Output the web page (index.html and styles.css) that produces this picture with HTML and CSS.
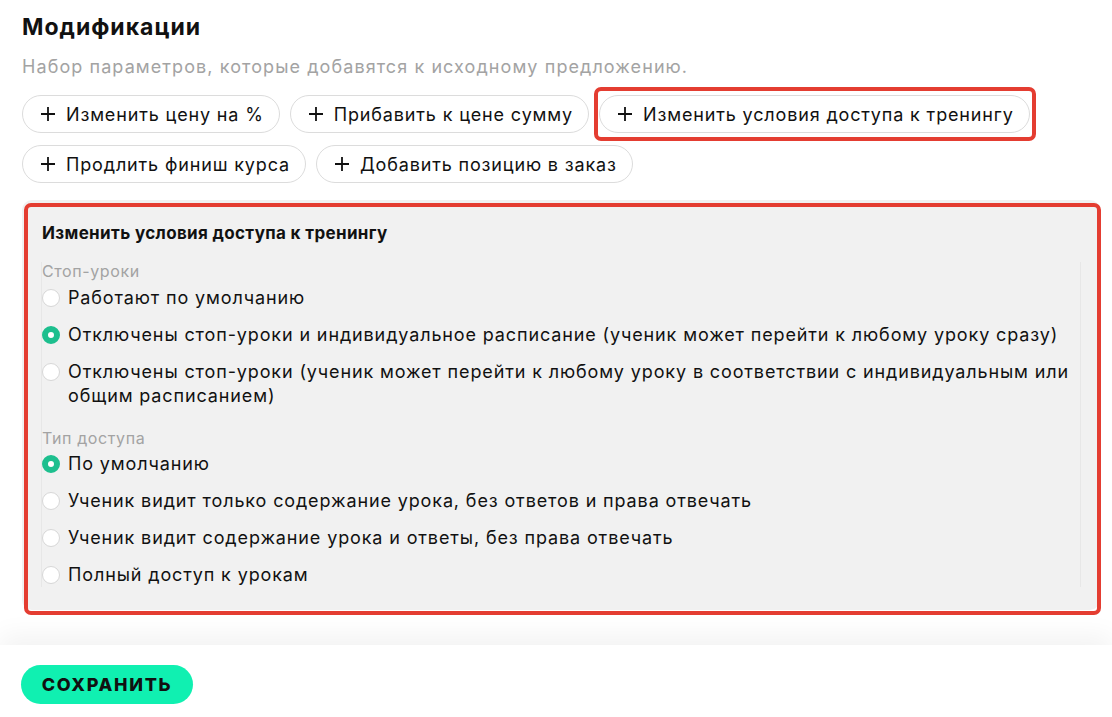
FILE: index.html
```html
<!DOCTYPE html>
<html lang="ru">

<head>
    <title>Модификации</title>
    <link rel="stylesheet" href="styles.css">
</head>

<body>
    <div class="page">
        <h2 class="section-title">Модификации</h2>
        <p class="section-hint">Набор параметров, которые добавятся к исходному предложению.</p>

        <div class="chips">
            <button class="chip">
                <svg class="plus" viewBox="0 0 14 14"><path d="M7 0v14M0 7h14" /></svg>
                Изменить цену на %
            </button>
            <button class="chip">
                <svg class="plus" viewBox="0 0 14 14"><path d="M7 0v14M0 7h14" /></svg>
                Прибавить к цене сумму
            </button>
            <button class="chip marked">
                <svg class="plus" viewBox="0 0 14 14"><path d="M7 0v14M0 7h14" /></svg>
                Изменить условия доступа к тренингу
            </button>
            <button class="chip">
                <svg class="plus" viewBox="0 0 14 14"><path d="M7 0v14M0 7h14" /></svg>
                Продлить финиш курса
            </button>
            <button class="chip">
                <svg class="plus" viewBox="0 0 14 14"><path d="M7 0v14M0 7h14" /></svg>
                Добавить позицию в заказ
            </button>
        </div>

        <div class="mod-panel marked">
            <div class="mod-title">Изменить условия доступа к тренингу</div>
            <div class="mod-body">
                <div class="group-label">Стоп-уроки</div>
                <label class="radio">
                    <input type="radio" name="stop">
                    <span class="radio-dot"></span>
                    <span>Работают по умолчанию</span>
                </label>
                <label class="radio">
                    <input type="radio" name="stop" checked>
                    <span class="radio-dot"></span>
                    <span>Отключены стоп-уроки и индивидуальное расписание (ученик может перейти к любому уроку сразу)</span>
                </label>
                <label class="radio">
                    <input type="radio" name="stop">
                    <span class="radio-dot"></span>
                    <span>Отключены стоп-уроки (ученик может перейти к любому уроку в соответствии с индивидуальным или общим расписанием)</span>
                </label>

                <div class="group-label group-gap">Тип доступа</div>
                <label class="radio">
                    <input type="radio" name="access" checked>
                    <span class="radio-dot"></span>
                    <span>По умолчанию</span>
                </label>
                <label class="radio">
                    <input type="radio" name="access">
                    <span class="radio-dot"></span>
                    <span>Ученик видит только содержание урока, без ответов и права отвечать</span>
                </label>
                <label class="radio">
                    <input type="radio" name="access">
                    <span class="radio-dot"></span>
                    <span>Ученик видит содержание урока и ответы, без права отвечать</span>
                </label>
                <label class="radio">
                    <input type="radio" name="access">
                    <span class="radio-dot"></span>
                    <span>Полный доступ к урокам</span>
                </label>
            </div>
        </div>
    </div>

    <div class="footer">
        <button class="save-button">СОХРАНИТЬ</button>
    </div>
</body>

</html>
```

FILE: styles.css
```css
body {
    font-family: Inter, "Noto Sans", sans-serif;
    margin: 0;
    padding: 0;
    background-color: white;
    color: #111;
    height: 717px;
    display: flex;
    flex-direction: column;
    overflow: hidden;
}

.page {
    flex: 1;
    padding: 12px 12px 0 22px;
}

.section-title {
    font-size: 23px;
    font-weight: 700;
    line-height: 30px;
    letter-spacing: 1px;
    margin: 0;
}

.section-hint {
    font-size: 18px;
    line-height: 22px;
    letter-spacing: 1.08px;
    color: #a3a3a3;
    margin: 14px 0 0;
}

.chips {
    display: flex;
    flex-wrap: wrap;
    gap: 12px 10px;
    margin-top: 17px;
}

.chip {
    position: relative;
    display: flex;
    align-items: center;
    gap: 11px;
    height: 38px;
    padding: 0 15px 0 18px;
    border: 1px solid #dcdcdc;
    border-radius: 19px;
    background: white;
    font-family: inherit;
    font-size: 18px;
    letter-spacing: 0.85px;
    color: #111;
}

.plus {
    width: 14px;
    height: 14px;
    stroke: #111;
    stroke-width: 1.8;
}

/* red highlight frames */
.marked::after {
    content: "";
    position: absolute;
    border: 4px solid #e43d31;
    border-radius: 7px;
    pointer-events: none;
}

.chip.marked::after {
    top: -9px;
    bottom: -9px;
    left: -6px;
    right: -7px;
}

.mod-panel {
    position: relative;
    margin-top: 17px;
    padding: 22px 19px 23px 20px;
    background-color: #f1f1f1;
    border-radius: 10px;
}

.mod-panel.marked::after {
    top: 3px;
    left: 2px;
    right: -1px;
    bottom: -5px;
}

.mod-title {
    font-size: 17px;
    font-weight: 700;
    line-height: 22px;
    letter-spacing: 0.35px;
}

.mod-body {
    margin: 18px 0 0 -1px;
    border-left: 1px solid #e7e7e7;
    border-right: 1px solid #e7e7e7;
}

.group-label {
    font-size: 16px;
    line-height: 18px;
    letter-spacing: 0.6px;
    color: #a3a3a3;
    margin-bottom: 6px;
}

.group-gap {
    margin-top: 21px;
    margin-bottom: 5px;
}

.radio {
    display: flex;
    align-items: flex-start;
    gap: 8px;
    font-size: 18px;
    line-height: 24px;
    letter-spacing: 0.87px;
}

.radio + .radio {
    margin-top: 13px;
}

.radio input {
    display: none;
}

.radio-dot {
    flex-shrink: 0;
    width: 18px;
    height: 18px;
    margin-top: 3px;
    border-radius: 50%;
    border: 1px solid #d7d7d7;
    background: white;
    box-sizing: border-box;
}

.radio input:checked + .radio-dot {
    border: 6px solid #1dbf8e;
    background: white;
}

.footer {
    height: 72px;
    padding: 20px 21px 0;
    box-sizing: border-box;
    background: white;
    box-shadow: 0 -10px 26px rgba(0, 0, 0, 0.05);
}

.save-button {
    height: 39px;
    width: 172px;
    border: none;
    border-radius: 20px;
    background-color: #10f0b1;
    font-family: inherit;
    font-size: 18px;
    font-weight: 800;
    letter-spacing: 1.7px;
    color: #111;
}
```
